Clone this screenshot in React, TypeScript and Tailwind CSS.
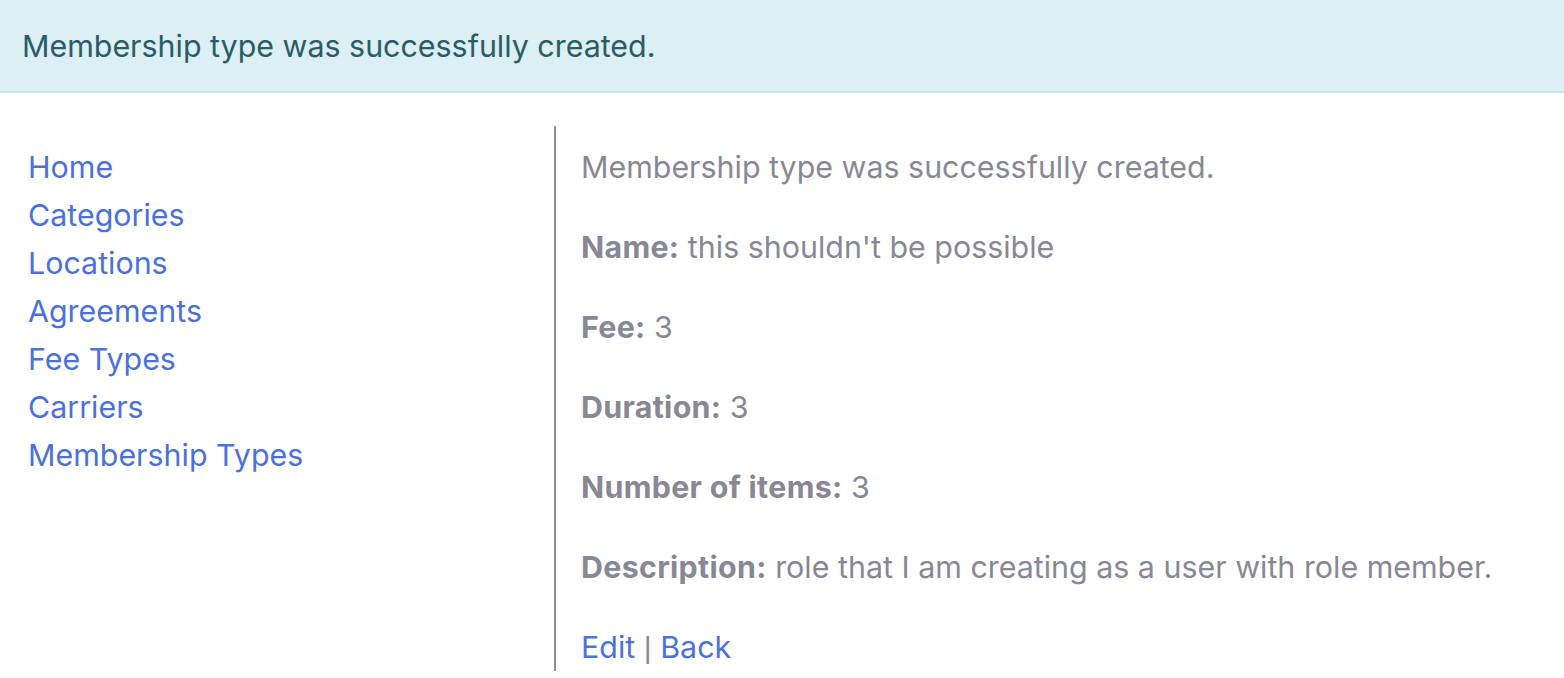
const navItems = [
  "Home",
  "Categories",
  "Locations",
  "Agreements",
  "Fee Types",
  "Carriers",
  "Membership Types",
];

const details: [string, string][] = [
  ["Name:", "this shouldn't be possible"],
  ["Fee:", "3"],
  ["Duration:", "3"],
  ["Number of items:", "3"],
  ["Description:", "role that I am creating as a user with role member."],
];

export default function App() {
  return (
    <div className="min-h-screen bg-white font-['Inter','Liberation_Sans',Arial,sans-serif] text-[30.4px] leading-[48px]">
      <div className="flex h-[93px] items-center border-b-2 border-[#c8e6ee] bg-[#dbeff5] px-[22px] text-[#2b5c66]">
        Membership type was successfully created.
      </div>

      <div className="mt-[33px] flex">
        <nav className="flex w-[554px] flex-col pl-[28px] pt-[17px]">
          {navItems.map((item) => (
            <a key={item} href="#" className="text-[#4c71db]">
              {item}
            </a>
          ))}
        </nav>

        <div className="flex-1 border-l-2 border-[#8e8e96] pl-[25px] pt-[17px] text-[#888894]">
          <p className="mb-8">Membership type was successfully created.</p>
          {details.map(([label, value]) => (
            <p key={label} className="mb-8">
              <span className="font-bold tracking-[0.3px]">{label}</span> {value}
            </p>
          ))}
          <p>
            <a href="#" className="text-[#4c71db]">Edit</a>{" "}
            <span className="font-['Liberation_Sans',sans-serif]">|</span>{" "}
            <a href="#" className="text-[#4c71db]">Back</a>
          </p>
        </div>
      </div>
    </div>
  );
}
